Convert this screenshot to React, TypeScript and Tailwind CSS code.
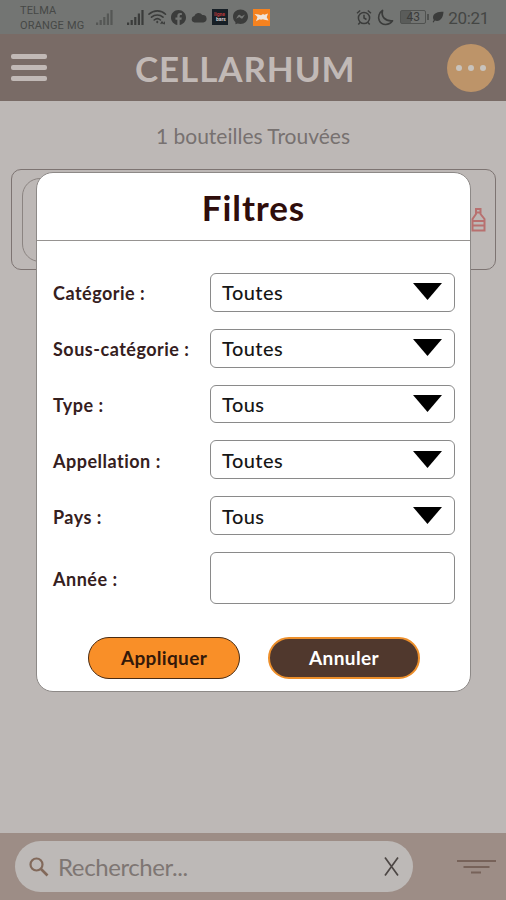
import React, { useState } from 'react'

const filters = [
    { label: 'Catégorie :', value: 'Toutes' },
    { label: 'Sous-catégorie :', value: 'Toutes' },
    { label: 'Type :', value: 'Tous' },
    { label: 'Appellation :', value: 'Toutes' },
    { label: 'Pays :', value: 'Tous' },
]

function SignalIcon({ className }: { className?: string }) {
    return (
        <svg className={className} width="17" height="17" viewBox="0 0 17 17" fill="currentColor">
            <path d="M0 13.5h2.200V16H0zM3.600 11h2.200v5H3.600zM7.200 8h2.200v8H7.200zM10.800 4.500H13V16h-2.200zM14.400 1h2.200v15h-2.200z" />
        </svg>
    )
}

function StatusBar() {
    return (
        <div className="flex h-[34px] items-center bg-[#737573] pl-5 pr-[17px] text-[#3b3c3b]">
            <div className="w-[76px] whitespace-nowrap pt-[2px] font-[Roboto] text-[11px] leading-[15px] tracking-[0.15px] text-[#464846]">
                <div>TELMA</div>
                <div>ORANGE MG</div>
            </div>
            <SignalIcon className="text-[#555755]" />
            <SignalIcon className="ml-[14px]" />
            <svg className="ml-[4px]" width="19" height="17" viewBox="0 0 19 17" fill="none" stroke="currentColor" strokeWidth="1.6" strokeLinecap="round">
                <path d="M1 5.2C5.800.8 13 .8 17.500 5.200M3.500 8.200c3.300-3 8.200-3 11.500 0M6.200 11c1.800-1.600 4.400-1.600 6.200 0" />
                <path d="M9.200 11.500l1.300 1.500-1.300 1.500L8 13z" fill="currentColor" stroke="none" />
                <path d="M13 14.500l1-1.500 1 1.500M16.300 13.200v1.600" strokeWidth="1.300" />
            </svg>
            <svg className="ml-[4px]" width="15" height="15" viewBox="0 0 24 24" fill="currentColor">
                <path d="M24 12.070C24 5.400 18.630 0 12 0S0 5.400 0 12.070c0 6.030 4.390 11.020 10.130 11.930v-8.440H7.080v-3.490h3.050V9.410c0-3.020 1.790-4.700 4.530-4.700 1.310 0 2.690.24 2.690.24v2.970h-1.520c-1.490 0-1.960.93-1.960 1.890v2.260h3.330l-.53 3.490h-2.800V24C19.610 23.090 24 18.100 24 12.070z" />
            </svg>
            <svg className="ml-[5px]" width="16" height="11" viewBox="0 0 16 11" fill="currentColor">
                <path d="M3.500 10.500a3.300 3.300 0 01-.2-6.500A4.500 4.500 0 0111.300 3 3.700 3.700 0 0112.300 10.500z" />
            </svg>
            <div className="ml-[5px] flex size-4 flex-col justify-center bg-[#171f26] px-[2px] font-[Roboto] text-[5px] font-bold leading-[5px]">
                <span className="text-[#b5393b]">ligne</span>
                <span className="pl-[2px] text-[#d0d0d0]">bars</span>
            </div>
            <svg className="ml-[5px]" width="15" height="16" viewBox="0 0 24 24" fill="currentColor">
                <path d="M12 0C5.200 0 0 4.900 0 11.500c0 3.500 1.400 6.400 3.800 8.500l.2 3.500 3.400-1.200c1.400.5 3 .7 4.600.7 6.800 0 12-4.900 12-11.500S18.800 0 12 0z" />
                <path d="M4.800 14.900l3.500-5.600c.6-.9 1.800-1.100 2.700-.5l2.800 2.100 5.400-2.800-3.500 5.600c-.6.9-1.800 1.100-2.700.5l-2.800-2.100z" fill="#737573" />
            </svg>
            <svg className="ml-[5px]" width="17" height="17" viewBox="0 0 17 17">
                <path d="M0 0h17v17H0z" fill="#f5821f" />
                <path d="M1.500 5l4 .5 2.500.8 2-1.300 1.300.7L15 4.500l-1.300 3.800 1.800 3.200-4-.8-1.700-.5-1.800.5-1.400-.5-3.600 2L4.500 8z" fill="#f0e4d9" />
            </svg>
            <svg className="ml-auto" width="16" height="17" viewBox="0 0 16 17" fill="none" stroke="currentColor" strokeWidth="1.500">
                <circle cx="8" cy="9" r="5.600" />
                <path d="M8 5.800V9l2.500 1.500M1 4.200L4.200 1.500M15 4.200l-3.200-2.700M4 13.500l-1.700 2M12 13.500l1.700 2" />
            </svg>
            <svg className="ml-[5px]" width="17" height="17" viewBox="0 0 17 17" fill="none" stroke="currentColor" strokeWidth="1.700" strokeLinejoin="round">
                <path d="M5.500 1.500C4 7.500 8 12.500 15.500 11.800 12 17 4.500 16.500 2.300 11.500.8 7.800 2.200 3.700 5.500 1.500z" />
            </svg>
            <div className="ml-[6px] flex h-[14px] w-[26px] items-center justify-center rounded-[2px] border border-[#505250] bg-linear-to-r from-[#5a5c5a] from-42% to-transparent to-42% font-[Roboto] text-[12px] leading-none text-[#3b3c3b]">
                43
            </div>
            <div className="ml-px h-[6px] w-[2px] bg-[#505250]" />
            <svg className="ml-[3px]" width="12" height="12" viewBox="0 0 12 12" fill="currentColor">
                <path d="M11.500.8C6 .8 1 2 1 6.500c0 1 .3 1.800.8 2.500L.6 11l1 .6 1.300-2C8.500 11 11 7 11.500.8z" />
            </svg>
            <span className="ml-[4px] pt-[2px] font-[Roboto] text-[17px] leading-none tracking-[-0.3px] text-[#444644]">20:21</span>
        </div>
    )
}

function Header() {
    return (
        <header className="flex h-[67px] items-center bg-[#796b66] px-[11px]">
            <button aria-label="Menu" className="flex w-[36px] flex-col gap-[6px]">
                <span className="h-[5px] w-[36px] rounded-[2px] bg-[#c1b9b6]" />
                <span className="h-[5px] w-[36px] rounded-[2px] bg-[#c1b9b6]" />
                <span className="h-[5px] w-[36px] rounded-[2px] bg-[#c1b9b6]" />
            </button>
            <h1 className="ml-[88px] whitespace-nowrap pt-px text-[35px] font-bold leading-none tracking-[0.9px] text-[#c1b9b6]">CELLARHUM</h1>
            <button aria-label="Options" className="ml-auto flex size-[48px] items-center justify-center gap-[6px] rounded-full bg-[#bd9469]">
                <span className="size-[6px] rounded-full bg-[#c8c3bd]" />
                <span className="size-[6px] rounded-full bg-[#c8c3bd]" />
                <span className="size-[6px] rounded-full bg-[#c8c3bd]" />
            </button>
        </header>
    )
}

function BottleCard() {
    return (
        <div className="mx-[11px] mt-[21px] flex h-[101px] w-[485px] items-center justify-between rounded-[10px] border border-[#7d7472] pl-[10px] pr-[9px]">
            <div className="h-[84px] w-[84px] rounded-[18px] border border-[#8b8481]" />
            <svg width="15" height="25" viewBox="0 0 15 25" fill="none" stroke="#b8706f" strokeWidth="2">
                <path d="M4 2h6.500M5 2v5L1.500 12v11.500h12V12L9.500 7V2M4.500 5.500h5.500M2 14h11M2 18.500h11" />
            </svg>
        </div>
    )
}

function SearchBar() {
    return (
        <footer className="mt-auto flex h-[67px] items-center bg-[#9d8d86] pl-[15px] pr-[10px]">
            <div className="flex h-[51px] w-[398px] items-center rounded-full bg-[#bdb9b7] px-[14px]">
                <svg width="20" height="20" viewBox="0 0 20 20" fill="none" stroke="#82695a" strokeWidth="2.200">
                    <circle cx="7.500" cy="7.500" r="6" />
                    <path d="M12 12l6.500 6.500" strokeWidth="2.600" />
                </svg>
                <span className="ml-[9px] text-[24px] leading-none tracking-[-0.4px] text-[#7e7673]">Rechercher...</span>
                <svg className="ml-auto" width="15" height="19" viewBox="0 0 15 19" fill="none" stroke="#4d4745" strokeWidth="1.700">
                    <path d="M1 .5l13 18M14 .5l-13 18" />
                </svg>
            </div>
            <svg className="ml-auto" width="39" height="16" viewBox="0 0 39 16" stroke="#776259" strokeWidth="2">
                <path d="M0 2h39M6.500 8h26M14 13.500h10" />
            </svg>
        </footer>
    )
}

function FilterModal() {
    const [year, setYear] = useState('')

    return (
        <div role="dialog" className="absolute left-[36px] top-[172px] h-[520px] w-[435px] rounded-[17px] border border-[#8d8987] bg-white">
            <h2 className="flex h-[68px] items-center justify-center border-b border-[#969391] pt-px text-[35px] font-bold leading-none tracking-[0.9px] text-[#2f0d0b]">
                Filtres
            </h2>
            <div className="flex flex-col gap-[17px] pl-4 pr-[15px] pt-8">
                {filters.map((f) => (
                    <div key={f.label} className="flex h-[38.800px] items-center">
                        <span className="w-[157px] whitespace-nowrap pt-[2px] text-[18px] font-bold leading-none tracking-[0.5px] text-[#35201e]">{f.label}</span>
                        <button className="flex h-full flex-1 items-center justify-between rounded-[6px] border border-[#8a8a8a] pl-[11px] pr-3">
                            <span className="text-[20px] font-medium leading-none tracking-[0.45px] text-[#161616]">{f.value}</span>
                            <svg className="mb-px" width="29" height="17" viewBox="0 0 29 17">
                                <path d="M0 0h29L14.500 17z" />
                            </svg>
                        </button>
                    </div>
                ))}
                <div className="flex h-[52px] items-center">
                    <label htmlFor="year" className="w-[157px] pt-[2px] text-[18px] font-bold leading-none tracking-[0.5px] text-[#35201e]">Année :</label>
                    <input
                        id="year"
                        value={year}
                        onChange={(e) => setYear(e.target.value)}
                        className="h-full min-w-0 flex-1 rounded-[6px] border border-[#8a8a8a] px-3"
                    />
                </div>
            </div>
            <div className="mt-[33px] flex gap-7 pl-[51px]">
                <button className="h-[42px] w-[152px] rounded-full border border-[#4a2b12] bg-[#f98f28] text-[19px] font-bold leading-none tracking-[0.35px] text-[#33190a]">
                    Appliquer
                </button>
                <button className="h-[42px] w-[152px] rounded-full border-2 border-[#ed8f2b] bg-[#50382d] text-[19px] font-bold leading-none tracking-[0.4px] text-white">
                    Annuler
                </button>
            </div>
        </div>
    )
}

export default function App() {
    return (
        <div className="relative flex h-[900px] w-[506px] flex-col overflow-hidden bg-[#bdb8b6] font-[Lato,sans-serif]">
            <StatusBar />
            <Header />
            <p className="mt-[23px] text-center text-[21px] leading-[24px] text-[#777170]">1 bouteilles Trouvées</p>
            <BottleCard />
            <SearchBar />
            <FilterModal />
        </div>
    )
}
